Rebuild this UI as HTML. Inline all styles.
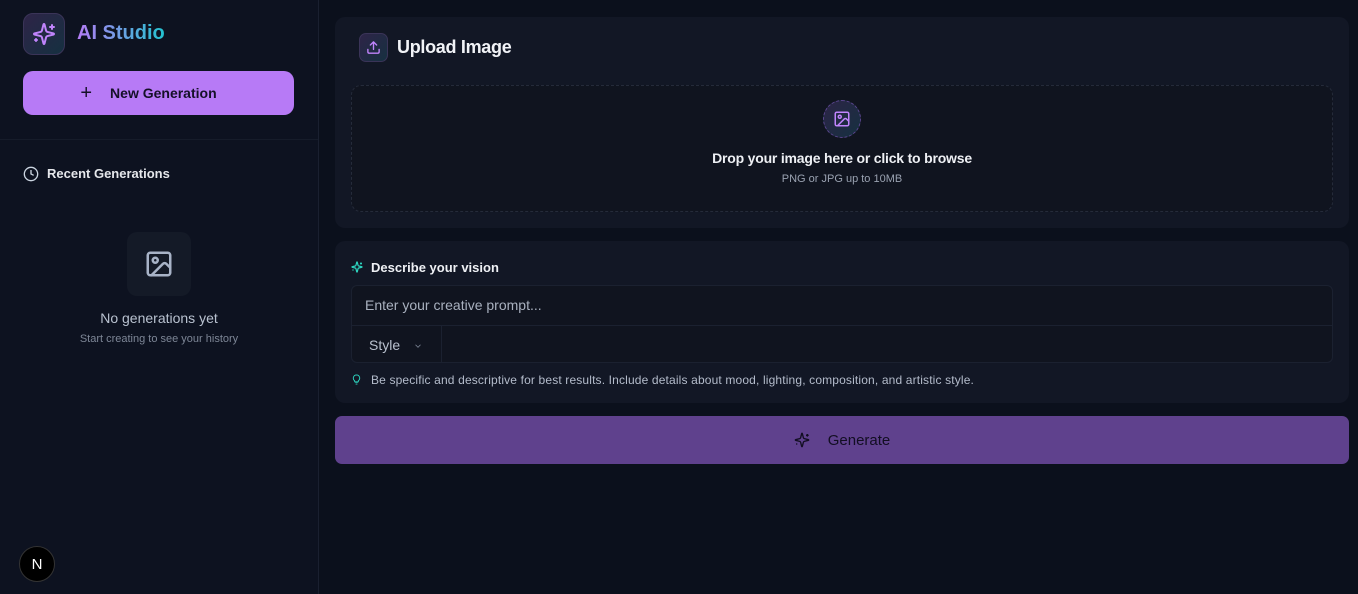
<!DOCTYPE html>
<html><head><style>
*{box-sizing:border-box;margin:0;padding:0}
body{width:1358px;height:594px;background:#0b101c;font-family:"Liberation Sans",sans-serif;position:relative;overflow:hidden;color:#e5e7eb}
.sb{position:absolute;left:0;top:0;width:319px;height:594px;background:#0d1220;border-right:1px solid #1a2030}
.abs{position:absolute}
.card{position:absolute;background:#121725;border-radius:10px}
</style></head><body>
<svg width="0" height="0" style="position:absolute"><defs>
<g id="sp"><path d="M9.937 15.5A2 2 0 0 0 8.5 14.063l-6.135-1.582a.5.5 0 0 1 0-.962L8.5 9.936A2 2 0 0 0 9.937 8.5l1.582-6.135a.5.5 0 0 1 .963 0L14.063 8.5A2 2 0 0 0 15.5 9.937l6.135 1.581a.5.5 0 0 1 0 .964L15.5 14.063a2 2 0 0 0-1.437 1.437l-1.582 6.135a.5.5 0 0 1-.963 0z"/><path d="M20 3v4M22 5h-4M4 17v2M5 18H3"/></g>
</defs></svg>
<div class="sb">
 <div class="abs" style="left:23px;top:13px;width:42px;height:42px;border-radius:10px;background:linear-gradient(135deg,#2e2448,#153040);border:1px solid #3a3458;display:flex;align-items:center;justify-content:center">
  <svg width="24" height="24" viewBox="0 0 24 24" fill="none" stroke="#c084fc" stroke-width="2" stroke-linecap="round" stroke-linejoin="round"><use href="#sp"/></svg>
 </div>
 <div class="abs" style="left:77px;top:22px;font-size:20px;font-weight:bold;background:linear-gradient(90deg,#b57cf6,#22c3d0);-webkit-background-clip:text;color:transparent">AI Studio</div>
 <div class="abs" style="left:23px;top:71px;width:271px;height:44px;border-radius:10px;background:#b77af6;display:flex;align-items:center;justify-content:center;color:#151028;font-size:14px;font-weight:bold">
  <span style="font-size:20px;font-weight:normal;margin-right:18px;margin-left:-20px">+</span>New Generation</div>
 <div class="abs" style="left:0;top:139px;width:318px;height:1px;background:#161c2a"></div>
 <svg class="abs" style="left:23px;top:166px" width="16" height="16" viewBox="0 0 24 24" fill="none" stroke="#cbd5e1" stroke-width="2"><circle cx="12" cy="12" r="10"/><path d="M12 6v6l4 2"/></svg>
 <div class="abs" style="left:47px;top:166px;font-size:13px;font-weight:bold;color:#e5e7eb">Recent Generations</div>
 <div class="abs" style="left:127px;top:232px;width:64px;height:64px;border-radius:10px;background:#141a27;display:flex;align-items:center;justify-content:center">
  <svg width="30" height="30" viewBox="0 0 24 24" fill="none" stroke="#a8b3c7" stroke-width="2" stroke-linecap="round" stroke-linejoin="round"><rect x="3" y="3" width="18" height="18" rx="2"/><circle cx="9" cy="9" r="2"/><path d="M21 15l-3.1-3.1a2 2 0 0 0-2.8 0L6 21"/></svg>
 </div>
 <div class="abs" style="left:0;width:318px;top:310px;text-align:center;font-size:14px;color:#b9c2d0">No generations yet</div>
 <div class="abs" style="left:0;width:318px;top:333px;text-align:center;font-size:11px;color:#7d8696">Start creating to see your history</div>
 <div class="abs" style="left:19px;top:546px;width:36px;height:36px;border-radius:50%;background:#000;border:1px solid #333;color:#fff;display:flex;align-items:center;justify-content:center;font-size:15px">N</div>
</div>

<div class="card" style="left:335px;top:17px;width:1014px;height:211px">
 <div class="abs" style="left:24px;top:16px;width:29px;height:29px;border-radius:7px;background:linear-gradient(135deg,#2e2448,#163040);border:1px solid #3a3458;display:flex;align-items:center;justify-content:center">
  <svg width="15" height="15" viewBox="0 0 24 24" fill="none" stroke="#c084fc" stroke-width="2.2" stroke-linecap="round" stroke-linejoin="round"><path d="M21 15v4a2 2 0 0 1-2 2H5a2 2 0 0 1-2-2v-4"/><path d="M17 8l-5-5-5 5M12 3v12"/></svg>
 </div>
 <div class="abs" style="left:62px;top:20px;font-size:18px;font-weight:bold;color:#f1f3f7;letter-spacing:-0.3px">Upload Image</div>
 <div class="abs" style="left:16px;top:68px;width:982px;height:127px;border:1px dashed #252b3a;border-radius:10px;background:#10141f">
  <div class="abs" style="left:471px;top:14px;width:38px;height:38px;border-radius:50%;border:1px dashed #5b4690;background:linear-gradient(135deg,#2c2446,#163040);display:flex;align-items:center;justify-content:center">
   <svg width="18" height="18" viewBox="0 0 24 24" fill="none" stroke="#c084fc" stroke-width="2" stroke-linecap="round" stroke-linejoin="round"><rect x="3" y="3" width="18" height="18" rx="2"/><circle cx="9" cy="9" r="2"/><path d="M21 15l-3.1-3.1a2 2 0 0 0-2.8 0L6 21"/></svg>
  </div>
  <div class="abs" style="left:0;width:980px;top:64px;text-align:center;font-size:14px;font-weight:bold;color:#eef0f4;letter-spacing:-0.2px">Drop your image here or click to browse</div>
  <div class="abs" style="left:0;width:980px;top:87px;text-align:center;font-size:11px;color:#9aa2b1">PNG or JPG up to 10MB</div>
 </div>
</div>

<div class="card" style="left:335px;top:241px;width:1014px;height:162px">
 <svg class="abs" style="left:16px;top:20px" width="12" height="12" viewBox="0 0 24 24" fill="none" stroke="#2dd4bf" stroke-width="2.5"><use href="#sp"/></svg>
 <div class="abs" style="left:36px;top:19px;font-size:13px;font-weight:bold;color:#eef0f4">Describe your vision</div>
 <div class="abs" style="left:16px;top:44px;width:982px;height:78px;border:1px solid #1b2130;border-radius:6px;background:#10141f">
  <div class="abs" style="left:13px;top:11px;font-size:14px;color:#a9b1bf">Enter your creative prompt...</div>
  <div class="abs" style="left:0;top:39px;width:980px;height:1px;background:#1b2130"></div>
  <div class="abs" style="left:0;top:40px;width:90px;height:37px;border-right:1px solid #1b2130"></div>
  <div class="abs" style="left:17px;top:51px;font-size:14px;color:#b9c1ce">Style</div>
  <svg class="abs" style="left:61px;top:55px" width="10" height="10" viewBox="0 0 24 24" fill="none" stroke="#7d8696" stroke-width="2"><path d="M6 9l6 6 6-6"/></svg>
 </div>
 <svg class="abs" style="left:16px;top:132px" width="11" height="13" viewBox="0 0 24 24" fill="none" stroke="#2dd4bf" stroke-width="2"><path d="M9 18h6M10 22h4M12 2a7 7 0 0 0-4 12.7V17h8v-2.3A7 7 0 0 0 12 2z"/></svg>
 <div class="abs" style="left:36px;top:132px;font-size:12px;color:#b4bccb;letter-spacing:0.15px">Be specific and descriptive for best results. Include details about mood, lighting, composition, and artistic style.</div>
</div>

<div class="abs" style="left:335px;top:416px;width:1014px;height:48px;border-radius:7px;background:#5f418d;display:flex;align-items:center;justify-content:center;font-size:15px;color:#120e22">
 <svg width="16" height="16" viewBox="0 0 24 24" fill="none" stroke="#120e22" stroke-width="2" style="margin-right:18px"><use href="#sp"/></svg>Generate
</div>
</body></html>
